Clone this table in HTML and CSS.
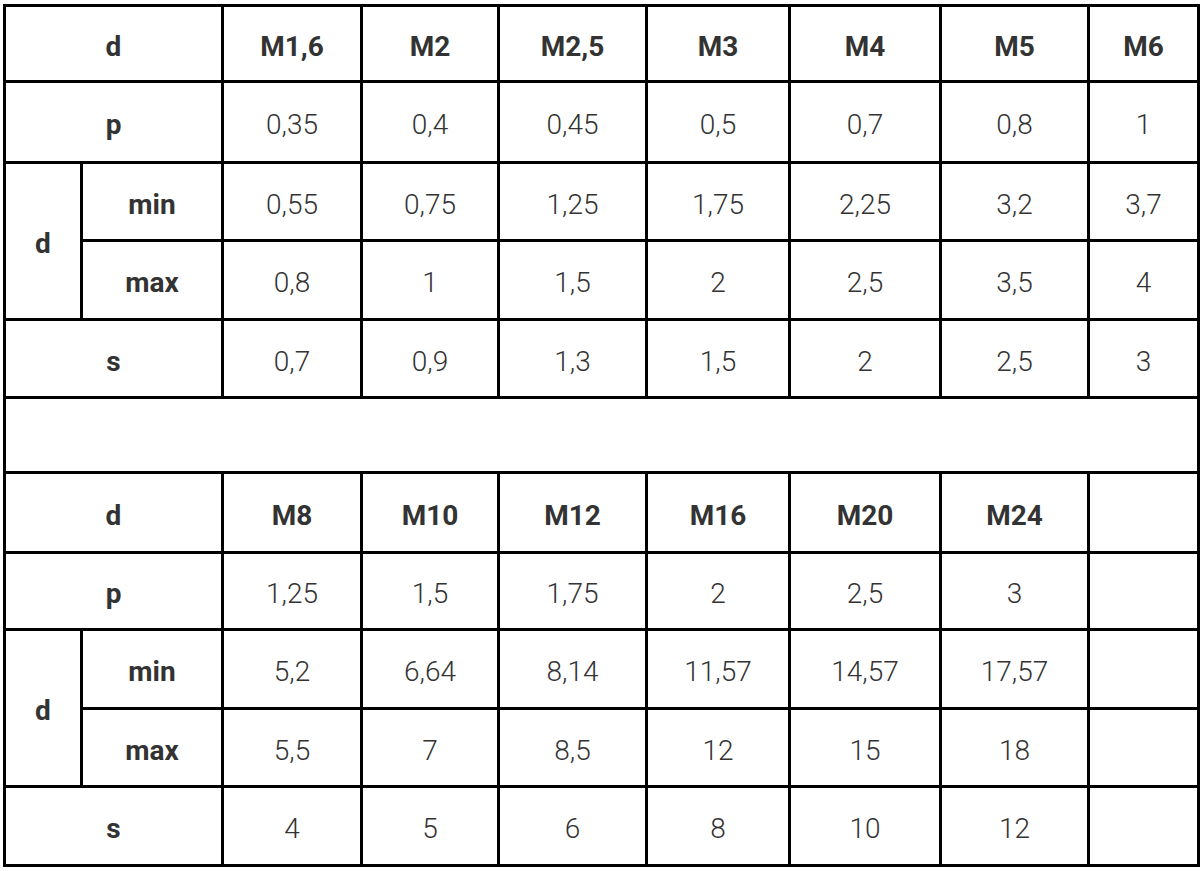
FILE: index.html
```html
<!DOCTYPE html>
<html lang="de">
<head>
<meta charset="utf-8">
<title>Maße</title>
<link rel="stylesheet" href="styles.css">
</head>
<body>
<div class="table" role="table">
  <div class="cell head span2 r1">d</div>
  <div class="cell head r1">M1,6</div>
  <div class="cell head r1">M2</div>
  <div class="cell head r1">M2,5</div>
  <div class="cell head r1">M3</div>
  <div class="cell head r1">M4</div>
  <div class="cell head r1">M5</div>
  <div class="cell head r1">M6</div>

  <div class="cell head span2 r2">p</div>
  <div class="cell r2">0,35</div>
  <div class="cell r2">0,4</div>
  <div class="cell r2">0,45</div>
  <div class="cell r2">0,5</div>
  <div class="cell r2">0,7</div>
  <div class="cell r2">0,8</div>
  <div class="cell r2">1</div>

  <div class="cell head rspan">d</div>
  <div class="cell head r3">min</div>
  <div class="cell r3">0,55</div>
  <div class="cell r3">0,75</div>
  <div class="cell r3">1,25</div>
  <div class="cell r3">1,75</div>
  <div class="cell r3">2,25</div>
  <div class="cell r3">3,2</div>
  <div class="cell r3">3,7</div>

  <div class="cell head r4">max</div>
  <div class="cell r4">0,8</div>
  <div class="cell r4">1</div>
  <div class="cell r4">1,5</div>
  <div class="cell r4">2</div>
  <div class="cell r4">2,5</div>
  <div class="cell r4">3,5</div>
  <div class="cell r4">4</div>

  <div class="cell head span2 r5">s</div>
  <div class="cell r5">0,7</div>
  <div class="cell r5">0,9</div>
  <div class="cell r5">1,3</div>
  <div class="cell r5">1,5</div>
  <div class="cell r5">2</div>
  <div class="cell r5">2,5</div>
  <div class="cell r5">3</div>

  <div class="cell spanall r6"></div>

  <div class="cell head span2 r7">d</div>
  <div class="cell head r7">M8</div>
  <div class="cell head r7">M10</div>
  <div class="cell head r7">M12</div>
  <div class="cell head r7">M16</div>
  <div class="cell head r7">M20</div>
  <div class="cell head r7">M24</div>
  <div class="cell r7"></div>

  <div class="cell head span2 r8">p</div>
  <div class="cell r8">1,25</div>
  <div class="cell r8">1,5</div>
  <div class="cell r8">1,75</div>
  <div class="cell r8">2</div>
  <div class="cell r8">2,5</div>
  <div class="cell r8">3</div>
  <div class="cell r8"></div>

  <div class="cell head rspan">d</div>
  <div class="cell head r9">min</div>
  <div class="cell r9">5,2</div>
  <div class="cell r9">6,64</div>
  <div class="cell r9">8,14</div>
  <div class="cell r9">11,57</div>
  <div class="cell r9">14,57</div>
  <div class="cell r9">17,57</div>
  <div class="cell r9"></div>

  <div class="cell head r10">max</div>
  <div class="cell r10">5,5</div>
  <div class="cell r10">7</div>
  <div class="cell r10">8,5</div>
  <div class="cell r10">12</div>
  <div class="cell r10">15</div>
  <div class="cell r10">18</div>
  <div class="cell r10"></div>

  <div class="cell head span2 r11">s</div>
  <div class="cell r11">4</div>
  <div class="cell r11">5</div>
  <div class="cell r11">6</div>
  <div class="cell r11">8</div>
  <div class="cell r11">10</div>
  <div class="cell r11">12</div>
  <div class="cell r11"></div>
</div>
</body>
</html>
```

FILE: styles.css
```css
html, body {
  margin: 0;
  padding: 0;
  background: #fff;
}

body {
  padding: 4px 0 0 3px;
  font-family: Roboto, "Liberation Sans", sans-serif;
  color: #333;
}

.table {
  display: grid;
  width: 1197px;
  box-sizing: border-box;
  grid-template-columns: 77px 141px 139px 137px 148px 143px 151px 148px 110px;
  grid-template-rows: 76px 81px 78px 79px 78px 75px 80px 77px 79px 78px 79px;
  border-left: 3px solid #000;
  border-top: 3px solid #000;
}

.cell {
  box-sizing: border-box;
  border-right: 3px solid #000;
  border-bottom: 3px solid #000;
  display: flex;
  align-items: center;
  justify-content: center;
  padding-top: 6px;
  font-size: 28px;
  font-weight: 300;
  line-height: 1;
}

.head {
  font-weight: 700;
}

.span2 {
  grid-column: span 2;
}

.spanall {
  grid-column: span 9;
}

.rspan {
  grid-row: span 2;
}
```
